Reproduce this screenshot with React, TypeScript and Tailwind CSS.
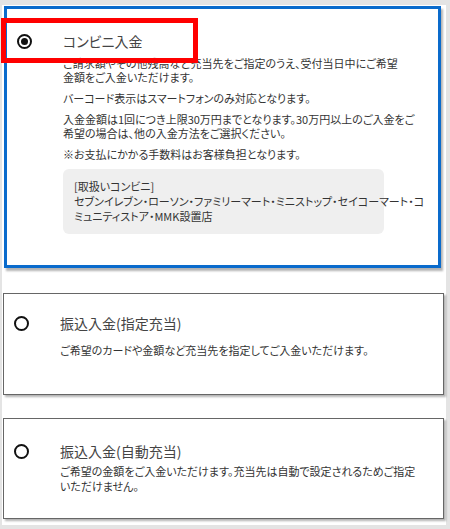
import React from "react";

const font = "font-['Noto_Sans_CJK_JP','Noto_Sans',sans-serif] [font-feature-settings:'palt']";

const Radio = ({ checked }: { checked?: boolean }) => {
  return (
    <span className="flex h-[15px] w-[15px] items-center justify-center rounded-full border-2 border-[#111]">
      {checked && <span className="h-[7px] w-[7px] rounded-full bg-[#111]" />}
    </span>
  );
};

const App = () => {
  return (
    <div className={`h-[529px] w-[450px] bg-[#e4e4e4] pt-[5px] pl-[2px] pr-[4px] pb-[4px] ${font}`}>
      <div className="relative flex h-full flex-col bg-white">
        {/* selected card */}
        <div className="ml-[2px] mt-[1px] h-[262px] w-[437px] border-[3px] border-[#0a6bcc] bg-white shadow-[2px_3px_2px_rgba(0,0,0,0.3)]">
          <div className="flex pt-[22px]">
            <div className="flex h-5 w-[56px] shrink-0 items-center pl-[10px]">
              <Radio checked />
            </div>
            <div className="flex-1 pr-4">
              <h2 className="text-[14px] leading-5 text-[#444]">コンビニ入金</h2>
              <div className="mt-[5px] flex flex-col gap-[7px] text-[11px] leading-[14px] text-[#333] whitespace-nowrap">
                <p>
                  ご請求額やその他残高など充当先をご指定のうえ、受付当日中にご希望
                  <br />
                  金額をご入金いただけます。
                </p>
                <p>バーコード表示はスマートフォンのみ対応となります。</p>
                <p>
                  入金金額は1回につき上限30万円までとなります。30万円以上のご入金をご
                  <br />
                  希望の場合は、他の入金方法をご選択ください。
                </p>
                <p>※お支払にかかる手数料はお客様負担となります。</p>
                <div className="mt-[1px] w-[321px] rounded-md bg-[#efefef] px-[11px] py-[10px] leading-[15px]">
                  [取扱いコンビニ]
                  <br />
                  セブンイレブン・ローソン・ファミリーマート・ミニストップ・セイコーマート・コ
                  <br />
                  ミュニティストア・MMK設置店
                </div>
              </div>
            </div>
          </div>
        </div>

        {/* specified */}
        <div className="ml-[1px] mt-[25px] h-[102px] w-[441px] border border-[#666] bg-white shadow-[2px_2px_2px_rgba(0,0,0,0.3)]">
          <div className="flex pt-[19px]">
            <div className="flex h-5 w-[56px] shrink-0 items-center pl-[10px]">
              <Radio />
            </div>
            <div className="flex-1 pr-4">
              <h2 className="text-[14px] leading-5 text-[#444]">振込入金(指定充当)</h2>
              <p className="mt-[10px] text-[11px] leading-[14px] text-[#333] whitespace-nowrap">
                ご希望のカードや金額など充当先を指定してご入金いただけます。
              </p>
            </div>
          </div>
        </div>

        {/* automatic */}
        <div className="ml-[1px] mt-[23px] h-[101px] w-[441px] border border-[#666] bg-white shadow-[2px_2px_2px_rgba(0,0,0,0.3)]">
          <div className="flex pt-[22px]">
            <div className="flex h-5 w-[56px] shrink-0 items-center pl-[10px]">
              <Radio />
            </div>
            <div className="flex-1 pr-4">
              <h2 className="text-[14px] leading-5 text-[#444]">振込入金(自動充当)</h2>
              <p className="mt-[3px] text-[11px] leading-[15px] text-[#333] whitespace-nowrap">
                ご希望の金額をご入金いただけます。充当先は自動で設定されるためご指定
                <br />
                いただけません。
              </p>
            </div>
          </div>
        </div>

        {/* highlight overlay */}
        <div className="pointer-events-none absolute left-[-1px] top-[13px] h-[45px] w-[197px] border-[5px] border-[#ff0000]" />
      </div>
    </div>
  );
};

export default App;
